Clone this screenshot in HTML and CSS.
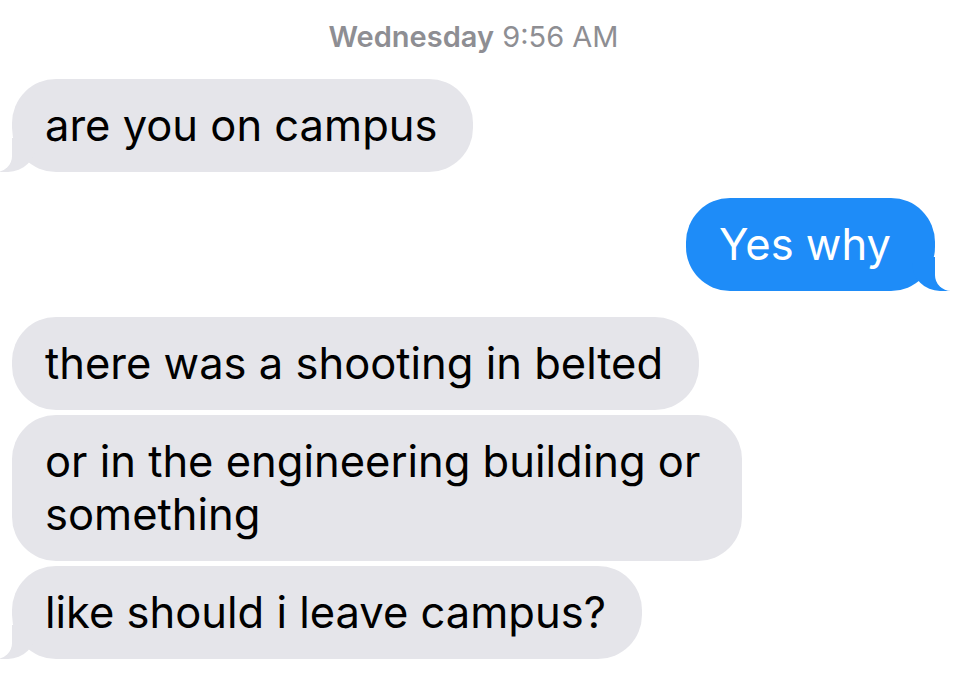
FILE: index.html
```html
<!DOCTYPE html>
<html lang="en">
<head>
    <meta charset="UTF-8">
    <meta name="viewport" content="width=device-width, initial-scale=1.0">
    <title>Messages</title>
    <link rel="stylesheet" href="styles.css">
</head>
<body>
    <div class="thread">
        <p class="stamp"><b>Wednesday</b> 9:56 AM</p>

        <div class="msg them tail">are you on campus</div>

        <div class="msg me tail">Yes why</div>

        <div class="group">
            <div class="msg them">there was a shooting in belted</div>
            <div class="msg them">or in the engineering building or something</div>
            <div class="msg them tail">like should i leave campus?</div>
        </div>
    </div>
</body>
</html>
```

FILE: styles.css
```css
body { margin: 0; padding: 0; background: #fff; font-family: Inter, "Liberation Sans", Arial, sans-serif; }
.thread { display: flex; flex-direction: column; gap: 26px; padding: 22px 45px 0 12px; }
.stamp { margin: 0 0 1px 0; text-align: center; font-size: 29px; line-height: 30px; color: #8e8e93; }
.stamp b { font-weight: 600; }
.group { display: flex; flex-direction: column; gap: 5px; }
.msg { box-sizing: border-box; position: relative; max-width: 730px; padding: 20px 36px 20px 33px; font-size: 43.5px; line-height: 53px; border-radius: 44px; }
.them { align-self: flex-start; background: #e5e5ea; color: #000; }
.me { align-self: flex-end; background: #1e8cf8; color: #fff; padding-right: 44px; }
.tail::before, .tail::after { content: ""; position: absolute; bottom: 0; height: 34px; }
.them.tail::before { left: -12px; width: 36px; background: #e5e5ea; border-bottom-right-radius: 28px; }
.them.tail::after { left: -18px; width: 18px; background: #fff; border-bottom-right-radius: 16px; }
.me.tail::before { right: -15px; width: 38px; background: #1e8cf8; border-bottom-left-radius: 28px; }
.me.tail::after { right: -21px; width: 21px; background: #fff; border-bottom-left-radius: 16px; }
```
